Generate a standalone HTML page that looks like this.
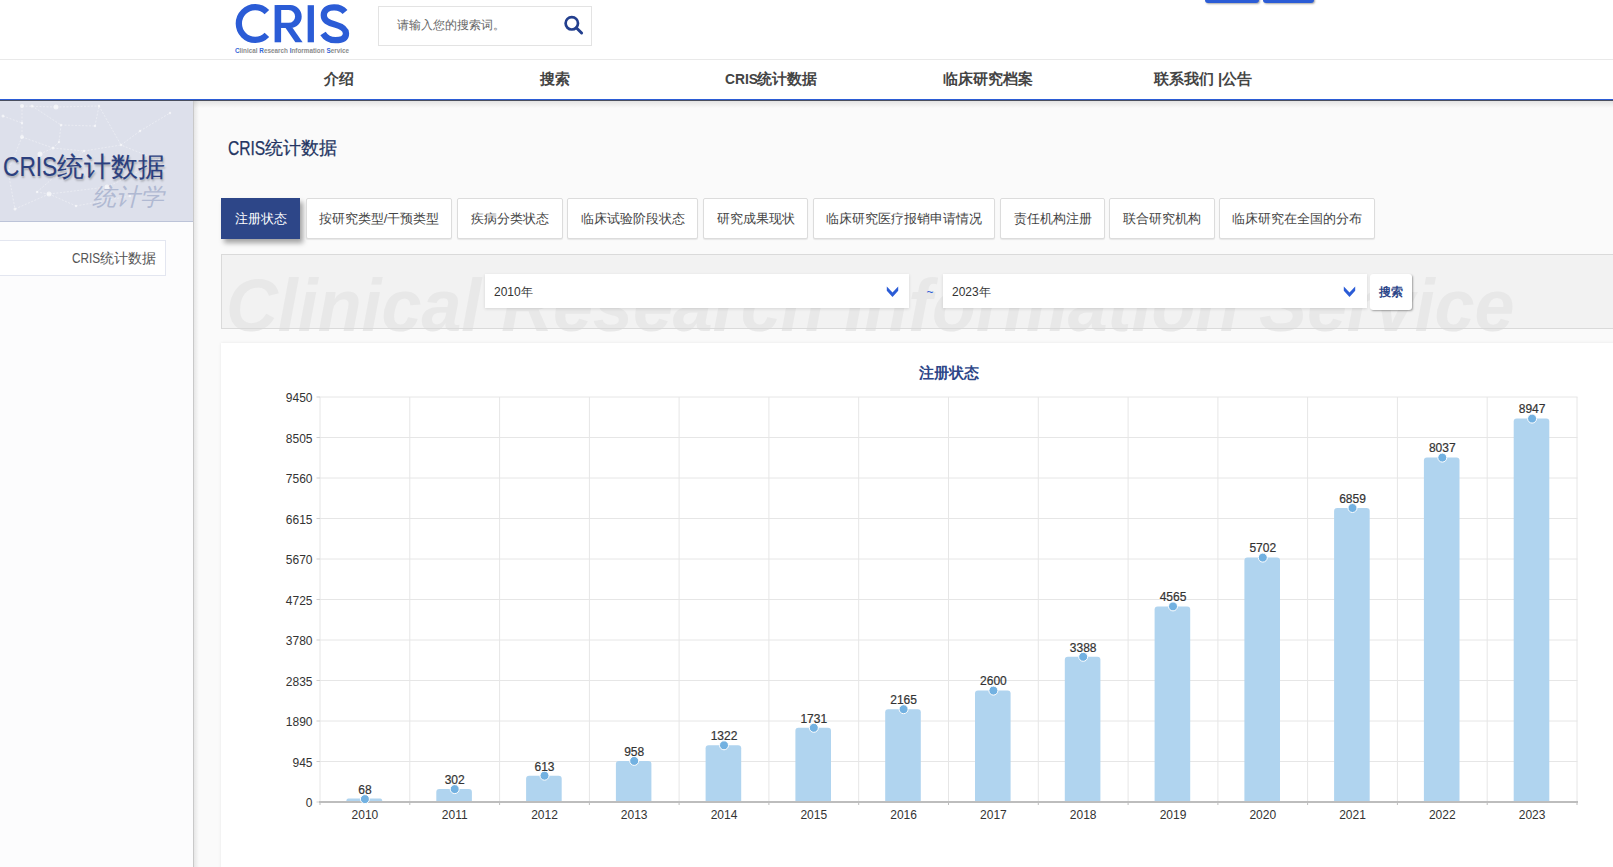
<!DOCTYPE html>
<html><head><meta charset="utf-8">
<style>
*{box-sizing:border-box;margin:0;padding:0}
html,body{width:1613px;height:867px;overflow:hidden;background:#fafafa;font-family:"Liberation Sans",sans-serif;color:#333}
.abs{position:absolute}
.lt{display:inline-block;transform-origin:left center}
#hdr{position:absolute;left:0;top:0;width:1613px;height:60px;background:#fff;border-bottom:1px solid #e9e9e9}
#nav{position:absolute;left:0;top:60px;width:1613px;height:40px;background:#fff;border-bottom:1px solid #2b5cd6;box-shadow:0 1px 0 #4a4f5e}
.nv{position:absolute;top:0;height:39px;line-height:37px;width:216px;text-align:center;font-size:15px;font-weight:bold;color:#444}
#side{position:absolute;left:0;top:101px;width:194px;height:766px;background:#fcfcfd;border-right:1px solid #c9c9c9}
#banner{position:absolute;left:0;top:0;width:193px;height:121px;background:#dde0eb;border-bottom:1px solid #bcc3d8;overflow:hidden}
.tab{position:absolute;top:198px;height:41px;background:#fff;border:1px solid #dcdcdc;border-radius:2px;box-shadow:0 1px 1px rgba(0,0,0,.08);font-size:12.8px;color:#444;line-height:39px;text-align:center;white-space:nowrap}
.tab.on{background:#2d4688;color:#fff;border-color:#2d4688;border-radius:0;box-shadow:3px 4px 5px rgba(0,0,0,.35)}
</style></head><body>
<div id="hdr">
  <svg class="abs" style="left:0;top:0" width="400" height="59" viewBox="0 0 400 59">
    <g fill="none" stroke="#2b5cd6" stroke-width="6.3">
      <path d="M266.9 12.2 A16.3 16.4 0 1 0 266.9 34.9"/>
      
      
      <path d="M310.8 5.2 V42.3"/>
      <path d="M345 12 C341 7 336 7.3 334 7.3 C327 7.3 323.8 11 323.8 15.3 C323.8 20.5 328 22.5 335 24.5 C342 26.5 346 29 346 33.5 C346 38 342 40.2 335.5 40.2 C330 40.2 325.5 37.5 323 33.5"/>
    </g>
    <path fill-rule="evenodd" d="M277 5.05 H290.6 A11.43 11.43 0 0 1 290.6 27.9 H277Z M281.1 10.1 H288.75 A6.35 6.35 0 0 1 288.75 22.8 H281.1Z" fill="#2b5cd6"/><path d="M274.6 5.05 H281.1 V42.3 H274.6Z" fill="#2b5cd6"/><path d="M285.2 27.5 L292.3 27.5 L302.6 42.3 L295.4 42.3Z" fill="#2b5cd6"/>
    <text x="235" y="52.7" font-size="7.4" font-weight="bold" textLength="114" lengthAdjust="spacingAndGlyphs" font-family="Liberation Sans" fill="#8c8c8c"><tspan fill="#3566dc">C</tspan>linical <tspan fill="#3566dc">R</tspan>esearch <tspan fill="#3566dc">I</tspan>nformation <tspan fill="#3566dc">S</tspan>ervice</text>
  </svg>
  <div class="abs" style="left:378px;top:6px;width:214px;height:40px;border:1px solid #e3e3e3;background:#fff"></div>
  <div class="abs" style="left:397px;top:16px;font-size:12px;color:#666;line-height:18px">请输入您的搜索词。</div>
  <svg class="abs" style="left:560px;top:12px" width="26" height="26" viewBox="560 12 26 26">
    <circle cx="571.8" cy="23.3" r="6.2" fill="none" stroke="#233f8e" stroke-width="2.7"/>
    <path d="M576.3 27.8 L581.6 33" stroke="#233f8e" stroke-width="3" stroke-linecap="round"/>
  </svg>
  <div class="abs" style="left:1205px;top:-10px;width:54px;height:13px;background:#2b5cd6;border-radius:3px;box-shadow:1px 1px 2px rgba(0,0,0,.35)"></div>
  <div class="abs" style="left:1263px;top:-10px;width:51px;height:13px;background:#2b5cd6;border-radius:3px;box-shadow:1px 1px 2px rgba(0,0,0,.35)"></div>
</div>
<div id="nav">
  <div class="nv" style="left:231px">介绍</div>
  <div class="nv" style="left:447px">搜索</div>
  <div class="nv" style="left:663px"><span class="lt" style="transform:scaleX(.92);margin-right:-2.9px">CRIS</span>统计数据</div>
  <div class="nv" style="left:880px">临床研究档案</div>
  <div class="nv" style="left:1095px">联系我们 |公告</div>
</div>
<div id="side">
  <div id="banner">
    <svg class="abs" style="left:0;top:0" width="193" height="120" viewBox="0 0 193 120"><line x1="22" y1="5" x2="56" y2="6" stroke="#fff" stroke-opacity=".45" stroke-width=".8" stroke-dasharray="2 1.5"/><line x1="56" y1="6" x2="99" y2="5" stroke="#fff" stroke-opacity=".45" stroke-width=".8" stroke-dasharray="2 1.5"/><line x1="22" y1="5" x2="22" y2="22" stroke="#fff" stroke-opacity=".45" stroke-width=".8" stroke-dasharray="2 1.5"/><line x1="22" y1="22" x2="22" y2="36" stroke="#fff" stroke-opacity=".45" stroke-width=".8" stroke-dasharray="2 1.5"/><line x1="22" y1="36" x2="53" y2="47" stroke="#fff" stroke-opacity=".45" stroke-width=".8" stroke-dasharray="2 1.5"/><line x1="53" y1="47" x2="84" y2="50" stroke="#fff" stroke-opacity=".45" stroke-width=".8" stroke-dasharray="2 1.5"/><line x1="84" y1="50" x2="121" y2="44" stroke="#fff" stroke-opacity=".45" stroke-width=".8" stroke-dasharray="2 1.5"/><line x1="32" y1="5" x2="61" y2="24" stroke="#fff" stroke-opacity=".45" stroke-width=".8" stroke-dasharray="2 1.5"/><line x1="61" y1="24" x2="59" y2="41" stroke="#fff" stroke-opacity=".45" stroke-width=".8" stroke-dasharray="2 1.5"/><line x1="59" y1="41" x2="53" y2="47" stroke="#fff" stroke-opacity=".45" stroke-width=".8" stroke-dasharray="2 1.5"/><line x1="99" y1="5" x2="121" y2="44" stroke="#fff" stroke-opacity=".45" stroke-width=".8" stroke-dasharray="2 1.5"/><line x1="40" y1="53" x2="53" y2="47" stroke="#fff" stroke-opacity=".45" stroke-width=".8" stroke-dasharray="2 1.5"/><line x1="49" y1="93" x2="76" y2="105" stroke="#fff" stroke-opacity=".45" stroke-width=".8" stroke-dasharray="2 1.5"/><line x1="49" y1="93" x2="15" y2="108" stroke="#fff" stroke-opacity=".45" stroke-width=".8" stroke-dasharray="2 1.5"/><line x1="49" y1="93" x2="37" y2="91" stroke="#fff" stroke-opacity=".45" stroke-width=".8" stroke-dasharray="2 1.5"/><line x1="37" y1="91" x2="84" y2="50" stroke="#fff" stroke-opacity=".45" stroke-width=".8" stroke-dasharray="2 1.5"/><line x1="107" y1="86" x2="49" y2="93" stroke="#fff" stroke-opacity=".45" stroke-width=".8" stroke-dasharray="2 1.5"/><line x1="121" y1="44" x2="140" y2="30" stroke="#fff" stroke-opacity=".45" stroke-width=".8" stroke-dasharray="2 1.5"/><line x1="140" y1="30" x2="170" y2="12" stroke="#fff" stroke-opacity=".45" stroke-width=".8" stroke-dasharray="2 1.5"/><line x1="22" y1="36" x2="8" y2="70" stroke="#fff" stroke-opacity=".45" stroke-width=".8" stroke-dasharray="2 1.5"/><line x1="8" y1="70" x2="15" y2="108" stroke="#fff" stroke-opacity=".45" stroke-width=".8" stroke-dasharray="2 1.5"/><line x1="76" y1="105" x2="130" y2="95" stroke="#fff" stroke-opacity=".45" stroke-width=".8" stroke-dasharray="2 1.5"/><line x1="107" y1="86" x2="160" y2="60" stroke="#fff" stroke-opacity=".45" stroke-width=".8" stroke-dasharray="2 1.5"/><line x1="160" y1="60" x2="121" y2="44" stroke="#fff" stroke-opacity=".45" stroke-width=".8" stroke-dasharray="2 1.5"/><line x1="61" y1="24" x2="95" y2="25" stroke="#fff" stroke-opacity=".45" stroke-width=".8" stroke-dasharray="2 1.5"/><line x1="95" y1="25" x2="99" y2="5" stroke="#fff" stroke-opacity=".45" stroke-width=".8" stroke-dasharray="2 1.5"/><line x1="3" y1="15" x2="22" y2="22" stroke="#fff" stroke-opacity=".45" stroke-width=".8" stroke-dasharray="2 1.5"/><circle cx="22" cy="5" r="2" fill="#fff" fill-opacity=".6"/><circle cx="32" cy="5" r="1.5" fill="#fff" fill-opacity=".6"/><circle cx="56" cy="6" r="2.5" fill="#fff" fill-opacity=".6"/><circle cx="99" cy="5" r="1.2" fill="#fff" fill-opacity=".6"/><circle cx="22" cy="22" r="1.2" fill="#fff" fill-opacity=".6"/><circle cx="61" cy="24" r="1.2" fill="#fff" fill-opacity=".6"/><circle cx="22" cy="36" r="2" fill="#fff" fill-opacity=".6"/><circle cx="59" cy="41" r="1.2" fill="#fff" fill-opacity=".6"/><circle cx="53" cy="47" r="1.5" fill="#fff" fill-opacity=".6"/><circle cx="84" cy="50" r="1.2" fill="#fff" fill-opacity=".6"/><circle cx="121" cy="44" r="1.2" fill="#fff" fill-opacity=".6"/><circle cx="40" cy="53" r="2.5" fill="#fff" fill-opacity=".6"/><circle cx="49" cy="93" r="2.5" fill="#fff" fill-opacity=".6"/><circle cx="76" cy="105" r="1.2" fill="#fff" fill-opacity=".6"/><circle cx="15" cy="108" r="1.5" fill="#fff" fill-opacity=".6"/><circle cx="37" cy="91" r="1.2" fill="#fff" fill-opacity=".6"/><circle cx="107" cy="86" r="2.5" fill="#fff" fill-opacity=".6"/><circle cx="140" cy="30" r="1.2" fill="#fff" fill-opacity=".6"/><circle cx="170" cy="12" r="1.2" fill="#fff" fill-opacity=".6"/><circle cx="8" cy="70" r="1.5" fill="#fff" fill-opacity=".6"/><circle cx="130" cy="95" r="1.2" fill="#fff" fill-opacity=".6"/><circle cx="160" cy="60" r="2.5" fill="#fff" fill-opacity=".6"/><circle cx="95" cy="25" r="1.2" fill="#fff" fill-opacity=".6"/><circle cx="3" cy="15" r="1.5" fill="#fff" fill-opacity=".6"/></svg>
    <div class="abs" style="left:3px;top:48px;font-size:27px;color:#2b3f7e;line-height:36px;white-space:nowrap;text-shadow:1px 2px 2px rgba(0,0,0,.25);-webkit-text-stroke:0.1px #2b3f7e"><span class="lt" style="transform:scaleX(.84);margin-right:-10.3px">CRIS</span>统计数据</div>
    <div class="abs" style="left:92px;top:80px;font-size:24px;color:#b0b9d2;line-height:32px;font-style:italic;white-space:nowrap">统计学</div>
  </div>
  <div class="abs" style="left:0;top:139px;width:166px;height:36px;border:1px solid #e3e6f0;border-left:none;background:#fff"></div>
  <div class="abs" style="left:0;top:139px;width:156px;height:36px;line-height:36px;text-align:right;font-size:14px;color:#555"><span class="lt" style="transform:scaleX(.84);margin-right:-5.4px">CRIS</span>统计数据</div>
</div>
<div class="abs" style="left:194px;top:101px;width:1419px;height:7px;background:linear-gradient(rgba(0,0,0,.09),rgba(0,0,0,0))"></div>
<div class="abs" style="left:194px;top:101px;width:5px;height:766px;background:linear-gradient(90deg,rgba(0,0,0,.08),rgba(0,0,0,0))"></div>
<div class="abs" style="left:228px;top:135px;font-size:18px;color:#243562;line-height:24px;-webkit-text-stroke:0.25px #243562"><span class="lt" style="font-size:19.5px;transform:translateY(1.2px) scaleX(.8);margin-right:-9.3px">CRIS</span>统计数据</div>

<div class="tab on" style="left:221px;width:79px">注册状态</div>
<div class="tab" style="left:306px;width:146px">按研究类型/干预类型</div>
<div class="tab" style="left:457px;width:106px">疾病分类状态</div>
<div class="tab" style="left:567px;width:131px">临床试验阶段状态</div>
<div class="tab" style="left:703px;width:105px">研究成果现状</div>
<div class="tab" style="left:813px;width:182px">临床研究医疗报销申请情况</div>
<div class="tab" style="left:1000px;width:105px">责任机构注册</div>
<div class="tab" style="left:1109px;width:106px">联合研究机构</div>
<div class="tab" style="left:1219px;width:156px">临床研究在全国的分布</div>

<div class="abs" style="left:221px;top:254px;width:1400px;height:75px;background:#f2f2f2"></div>
<div class="abs" style="left:226px;top:263px;font-size:75px;font-weight:bold;font-style:italic;color:#e8e8e8;line-height:84px;white-space:nowrap;transform:scaleX(.957);transform-origin:left top">Clinical Research Information Service</div>
<div class="abs" style="left:221px;top:254px;width:1400px;height:75px;border:1px solid #dadada"></div>

<div class="abs" style="left:485px;top:274px;width:424px;height:34px;background:#fff;box-shadow:0 1px 3px rgba(0,0,0,.12)"></div>
<div class="abs" style="left:494px;top:284px;font-size:12px;line-height:16px;color:#333">2010年</div>
<div class="abs" style="left:926.5px;top:284px;font-size:12px;line-height:16px;color:#2b5cd6">~</div>
<div class="abs" style="left:943px;top:274px;width:424px;height:34px;background:#fff;box-shadow:0 1px 3px rgba(0,0,0,.12)"></div>
<div class="abs" style="left:952px;top:284px;font-size:12px;line-height:16px;color:#333">2023年</div>
<svg class="abs" style="left:886px;top:286px" width="13" height="12" viewBox="0 0 13 12"><path d="M0.8 0.6 L6.5 6.6 L12.2 0.6 L12.2 4.8 L6.5 11 L0.8 4.8Z" fill="#2b5cd6"/></svg>
<svg class="abs" style="left:1343px;top:286px" width="13" height="12" viewBox="0 0 13 12"><path d="M0.8 0.6 L6.5 6.6 L12.2 0.6 L12.2 4.8 L6.5 11 L0.8 4.8Z" fill="#2b5cd6"/></svg>
<div class="abs" style="left:1370px;top:274px;width:42px;height:36px;background:#fff;border-radius:3px;box-shadow:1px 1px 2px rgba(0,0,0,.35);font-size:12px;font-weight:bold;color:#2d4688;text-align:center;line-height:36px">搜索</div>

<div class="abs" style="left:221px;top:343px;width:1400px;height:540px;background:#fff;box-shadow:0 0 3px rgba(0,0,0,.08)"></div>
<div class="abs" style="left:899px;top:362px;width:100px;text-align:center;font-size:15px;font-weight:bold;color:#2d4688;line-height:22px">注册状态</div>
<svg id="chart" class="abs" style="left:0;top:0" width="1613" height="867" viewBox="0 0 1613 867" font-family="Liberation Sans"><line x1="320.0" y1="397.0" x2="1577.5" y2="397.0" stroke="#e6e6e6" stroke-width="1"/><line x1="320.0" y1="437.5" x2="1577.5" y2="437.5" stroke="#e6e6e6" stroke-width="1"/><line x1="320.0" y1="478.0" x2="1577.5" y2="478.0" stroke="#e6e6e6" stroke-width="1"/><line x1="320.0" y1="518.5" x2="1577.5" y2="518.5" stroke="#e6e6e6" stroke-width="1"/><line x1="320.0" y1="559.0" x2="1577.5" y2="559.0" stroke="#e6e6e6" stroke-width="1"/><line x1="320.0" y1="599.5" x2="1577.5" y2="599.5" stroke="#e6e6e6" stroke-width="1"/><line x1="320.0" y1="640.0" x2="1577.5" y2="640.0" stroke="#e6e6e6" stroke-width="1"/><line x1="320.0" y1="680.5" x2="1577.5" y2="680.5" stroke="#e6e6e6" stroke-width="1"/><line x1="320.0" y1="721.0" x2="1577.5" y2="721.0" stroke="#e6e6e6" stroke-width="1"/><line x1="320.0" y1="761.5" x2="1577.5" y2="761.5" stroke="#e6e6e6" stroke-width="1"/><line x1="320.0" y1="802.0" x2="1577.5" y2="802.0" stroke="#e6e6e6" stroke-width="1"/><line x1="320.0" y1="397.0" x2="320.0" y2="802.0" stroke="#e6e6e6" stroke-width="1"/><line x1="409.8" y1="397.0" x2="409.8" y2="802.0" stroke="#e6e6e6" stroke-width="1"/><line x1="499.6" y1="397.0" x2="499.6" y2="802.0" stroke="#e6e6e6" stroke-width="1"/><line x1="589.4" y1="397.0" x2="589.4" y2="802.0" stroke="#e6e6e6" stroke-width="1"/><line x1="679.1" y1="397.0" x2="679.1" y2="802.0" stroke="#e6e6e6" stroke-width="1"/><line x1="768.9" y1="397.0" x2="768.9" y2="802.0" stroke="#e6e6e6" stroke-width="1"/><line x1="858.7" y1="397.0" x2="858.7" y2="802.0" stroke="#e6e6e6" stroke-width="1"/><line x1="948.5" y1="397.0" x2="948.5" y2="802.0" stroke="#e6e6e6" stroke-width="1"/><line x1="1038.3" y1="397.0" x2="1038.3" y2="802.0" stroke="#e6e6e6" stroke-width="1"/><line x1="1128.1" y1="397.0" x2="1128.1" y2="802.0" stroke="#e6e6e6" stroke-width="1"/><line x1="1217.9" y1="397.0" x2="1217.9" y2="802.0" stroke="#e6e6e6" stroke-width="1"/><line x1="1307.6" y1="397.0" x2="1307.6" y2="802.0" stroke="#e6e6e6" stroke-width="1"/><line x1="1397.4" y1="397.0" x2="1397.4" y2="802.0" stroke="#e6e6e6" stroke-width="1"/><line x1="1487.2" y1="397.0" x2="1487.2" y2="802.0" stroke="#e6e6e6" stroke-width="1"/><line x1="1577.0" y1="397.0" x2="1577.0" y2="802.0" stroke="#e6e6e6" stroke-width="1"/><line x1="316.5" y1="397.0" x2="320.0" y2="397.0" stroke="#cfcfcf" stroke-width="1"/><text x="312.5" y="402.0" text-anchor="end" font-size="12" fill="#333">9450</text><line x1="316.5" y1="437.5" x2="320.0" y2="437.5" stroke="#cfcfcf" stroke-width="1"/><text x="312.5" y="442.5" text-anchor="end" font-size="12" fill="#333">8505</text><line x1="316.5" y1="478.0" x2="320.0" y2="478.0" stroke="#cfcfcf" stroke-width="1"/><text x="312.5" y="483.0" text-anchor="end" font-size="12" fill="#333">7560</text><line x1="316.5" y1="518.5" x2="320.0" y2="518.5" stroke="#cfcfcf" stroke-width="1"/><text x="312.5" y="523.5" text-anchor="end" font-size="12" fill="#333">6615</text><line x1="316.5" y1="559.0" x2="320.0" y2="559.0" stroke="#cfcfcf" stroke-width="1"/><text x="312.5" y="564.0" text-anchor="end" font-size="12" fill="#333">5670</text><line x1="316.5" y1="599.5" x2="320.0" y2="599.5" stroke="#cfcfcf" stroke-width="1"/><text x="312.5" y="604.5" text-anchor="end" font-size="12" fill="#333">4725</text><line x1="316.5" y1="640.0" x2="320.0" y2="640.0" stroke="#cfcfcf" stroke-width="1"/><text x="312.5" y="645.0" text-anchor="end" font-size="12" fill="#333">3780</text><line x1="316.5" y1="680.5" x2="320.0" y2="680.5" stroke="#cfcfcf" stroke-width="1"/><text x="312.5" y="685.5" text-anchor="end" font-size="12" fill="#333">2835</text><line x1="316.5" y1="721.0" x2="320.0" y2="721.0" stroke="#cfcfcf" stroke-width="1"/><text x="312.5" y="726.0" text-anchor="end" font-size="12" fill="#333">1890</text><line x1="316.5" y1="761.5" x2="320.0" y2="761.5" stroke="#cfcfcf" stroke-width="1"/><text x="312.5" y="766.5" text-anchor="end" font-size="12" fill="#333">945</text><line x1="316.5" y1="802.0" x2="320.0" y2="802.0" stroke="#cfcfcf" stroke-width="1"/><text x="312.5" y="807.0" text-anchor="end" font-size="12" fill="#333">0</text><path d="M346.5 802.0 V800.2 Q346.5 798.4 348.3 798.4 H380.3 Q382.1 798.4 382.1 800.2 V802.0Z" fill="#b0d4ef"/><path d="M436.3 802.0 V792.1 Q436.3 789.1 439.3 789.1 H468.9 Q471.9 789.1 471.9 792.1 V802.0Z" fill="#b0d4ef"/><path d="M526.1 802.0 V778.7 Q526.1 775.7 529.1 775.7 H558.7 Q561.7 775.7 561.7 778.7 V802.0Z" fill="#b0d4ef"/><path d="M615.9 802.0 V763.9 Q615.9 760.9 618.9 760.9 H648.4 Q651.4 760.9 651.4 763.9 V802.0Z" fill="#b0d4ef"/><path d="M705.6 802.0 V748.3 Q705.6 745.3 708.6 745.3 H738.2 Q741.2 745.3 741.2 748.3 V802.0Z" fill="#b0d4ef"/><path d="M795.4 802.0 V730.8 Q795.4 727.8 798.4 727.8 H828.0 Q831.0 727.8 831.0 730.8 V802.0Z" fill="#b0d4ef"/><path d="M885.2 802.0 V712.2 Q885.2 709.2 888.2 709.2 H917.8 Q920.8 709.2 920.8 712.2 V802.0Z" fill="#b0d4ef"/><path d="M975.0 802.0 V693.6 Q975.0 690.6 978.0 690.6 H1007.6 Q1010.6 690.6 1010.6 693.6 V802.0Z" fill="#b0d4ef"/><path d="M1064.8 802.0 V659.8 Q1064.8 656.8 1067.8 656.8 H1097.4 Q1100.4 656.8 1100.4 659.8 V802.0Z" fill="#b0d4ef"/><path d="M1154.6 802.0 V609.4 Q1154.6 606.4 1157.6 606.4 H1187.2 Q1190.2 606.4 1190.2 609.4 V802.0Z" fill="#b0d4ef"/><path d="M1244.4 802.0 V560.6 Q1244.4 557.6 1247.4 557.6 H1277.0 Q1280.0 557.6 1280.0 560.6 V802.0Z" fill="#b0d4ef"/><path d="M1334.1 802.0 V511.0 Q1334.1 508.0 1337.1 508.0 H1366.7 Q1369.7 508.0 1369.7 511.0 V802.0Z" fill="#b0d4ef"/><path d="M1423.9 802.0 V460.6 Q1423.9 457.6 1426.9 457.6 H1456.5 Q1459.5 457.6 1459.5 460.6 V802.0Z" fill="#b0d4ef"/><path d="M1513.7 802.0 V421.6 Q1513.7 418.6 1516.7 418.6 H1546.3 Q1549.3 418.6 1549.3 421.6 V802.0Z" fill="#b0d4ef"/><line x1="319.0" y1="802" x2="1578.0" y2="802" stroke="#bdbdbd" stroke-width="2"/><line x1="320.0" y1="802" x2="320.0" y2="805" stroke="#bdbdbd" stroke-width="1"/><line x1="409.8" y1="802" x2="409.8" y2="805" stroke="#bdbdbd" stroke-width="1"/><line x1="499.6" y1="802" x2="499.6" y2="805" stroke="#bdbdbd" stroke-width="1"/><line x1="589.4" y1="802" x2="589.4" y2="805" stroke="#bdbdbd" stroke-width="1"/><line x1="679.1" y1="802" x2="679.1" y2="805" stroke="#bdbdbd" stroke-width="1"/><line x1="768.9" y1="802" x2="768.9" y2="805" stroke="#bdbdbd" stroke-width="1"/><line x1="858.7" y1="802" x2="858.7" y2="805" stroke="#bdbdbd" stroke-width="1"/><line x1="948.5" y1="802" x2="948.5" y2="805" stroke="#bdbdbd" stroke-width="1"/><line x1="1038.3" y1="802" x2="1038.3" y2="805" stroke="#bdbdbd" stroke-width="1"/><line x1="1128.1" y1="802" x2="1128.1" y2="805" stroke="#bdbdbd" stroke-width="1"/><line x1="1217.9" y1="802" x2="1217.9" y2="805" stroke="#bdbdbd" stroke-width="1"/><line x1="1307.6" y1="802" x2="1307.6" y2="805" stroke="#bdbdbd" stroke-width="1"/><line x1="1397.4" y1="802" x2="1397.4" y2="805" stroke="#bdbdbd" stroke-width="1"/><line x1="1487.2" y1="802" x2="1487.2" y2="805" stroke="#bdbdbd" stroke-width="1"/><line x1="1577.0" y1="802" x2="1577.0" y2="805" stroke="#bdbdbd" stroke-width="1"/><circle cx="364.9" cy="799.1" r="4.5" fill="#72b1e1" stroke="#fff" stroke-width="1"/><text x="364.9" y="793.9" text-anchor="middle" font-size="12" fill="#333" stroke="#333" stroke-width="0.2">68</text><text x="364.9" y="818.7" text-anchor="middle" font-size="12" fill="#333">2010</text><circle cx="454.7" cy="789.1" r="4.5" fill="#72b1e1" stroke="#fff" stroke-width="1"/><text x="454.7" y="783.9" text-anchor="middle" font-size="12" fill="#333" stroke="#333" stroke-width="0.2">302</text><text x="454.7" y="818.7" text-anchor="middle" font-size="12" fill="#333">2011</text><circle cx="544.5" cy="775.7" r="4.5" fill="#72b1e1" stroke="#fff" stroke-width="1"/><text x="544.5" y="770.5" text-anchor="middle" font-size="12" fill="#333" stroke="#333" stroke-width="0.2">613</text><text x="544.5" y="818.7" text-anchor="middle" font-size="12" fill="#333">2012</text><circle cx="634.2" cy="760.9" r="4.5" fill="#72b1e1" stroke="#fff" stroke-width="1"/><text x="634.2" y="755.7" text-anchor="middle" font-size="12" fill="#333" stroke="#333" stroke-width="0.2">958</text><text x="634.2" y="818.7" text-anchor="middle" font-size="12" fill="#333">2013</text><circle cx="724.0" cy="745.3" r="4.5" fill="#72b1e1" stroke="#fff" stroke-width="1"/><text x="724.0" y="740.1" text-anchor="middle" font-size="12" fill="#333" stroke="#333" stroke-width="0.2">1322</text><text x="724.0" y="818.7" text-anchor="middle" font-size="12" fill="#333">2014</text><circle cx="813.8" cy="727.8" r="4.5" fill="#72b1e1" stroke="#fff" stroke-width="1"/><text x="813.8" y="722.6" text-anchor="middle" font-size="12" fill="#333" stroke="#333" stroke-width="0.2">1731</text><text x="813.8" y="818.7" text-anchor="middle" font-size="12" fill="#333">2015</text><circle cx="903.6" cy="709.2" r="4.5" fill="#72b1e1" stroke="#fff" stroke-width="1"/><text x="903.6" y="704.0" text-anchor="middle" font-size="12" fill="#333" stroke="#333" stroke-width="0.2">2165</text><text x="903.6" y="818.7" text-anchor="middle" font-size="12" fill="#333">2016</text><circle cx="993.4" cy="690.6" r="4.5" fill="#72b1e1" stroke="#fff" stroke-width="1"/><text x="993.4" y="685.4" text-anchor="middle" font-size="12" fill="#333" stroke="#333" stroke-width="0.2">2600</text><text x="993.4" y="818.7" text-anchor="middle" font-size="12" fill="#333">2017</text><circle cx="1083.2" cy="656.8" r="4.5" fill="#72b1e1" stroke="#fff" stroke-width="1"/><text x="1083.2" y="651.6" text-anchor="middle" font-size="12" fill="#333" stroke="#333" stroke-width="0.2">3388</text><text x="1083.2" y="818.7" text-anchor="middle" font-size="12" fill="#333">2018</text><circle cx="1173.0" cy="606.4" r="4.5" fill="#72b1e1" stroke="#fff" stroke-width="1"/><text x="1173.0" y="601.2" text-anchor="middle" font-size="12" fill="#333" stroke="#333" stroke-width="0.2">4565</text><text x="1173.0" y="818.7" text-anchor="middle" font-size="12" fill="#333">2019</text><circle cx="1262.8" cy="557.6" r="4.5" fill="#72b1e1" stroke="#fff" stroke-width="1"/><text x="1262.8" y="552.4" text-anchor="middle" font-size="12" fill="#333" stroke="#333" stroke-width="0.2">5702</text><text x="1262.8" y="818.7" text-anchor="middle" font-size="12" fill="#333">2020</text><circle cx="1352.5" cy="508.0" r="4.5" fill="#72b1e1" stroke="#fff" stroke-width="1"/><text x="1352.5" y="502.8" text-anchor="middle" font-size="12" fill="#333" stroke="#333" stroke-width="0.2">6859</text><text x="1352.5" y="818.7" text-anchor="middle" font-size="12" fill="#333">2021</text><circle cx="1442.3" cy="457.6" r="4.5" fill="#72b1e1" stroke="#fff" stroke-width="1"/><text x="1442.3" y="452.4" text-anchor="middle" font-size="12" fill="#333" stroke="#333" stroke-width="0.2">8037</text><text x="1442.3" y="818.7" text-anchor="middle" font-size="12" fill="#333">2022</text><circle cx="1532.1" cy="418.6" r="4.5" fill="#72b1e1" stroke="#fff" stroke-width="1"/><text x="1532.1" y="413.4" text-anchor="middle" font-size="12" fill="#333" stroke="#333" stroke-width="0.2">8947</text><text x="1532.1" y="818.7" text-anchor="middle" font-size="12" fill="#333">2023</text></svg>
</body></html>
